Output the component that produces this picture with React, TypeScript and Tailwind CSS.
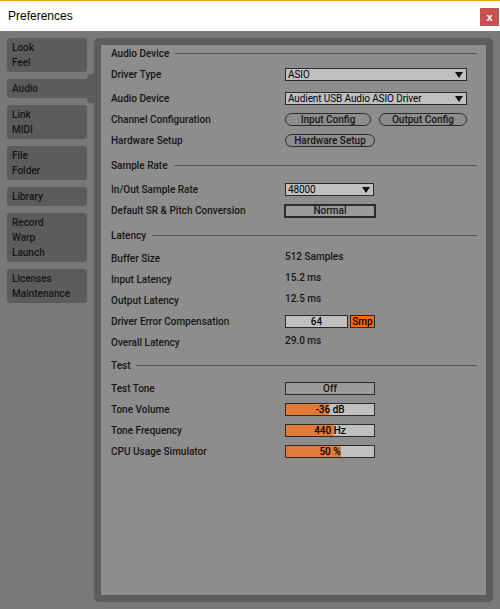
import type { ReactNode } from "react";

const tabs: { lines: string[]; active?: boolean }[] = [
  { lines: ["Look", "Feel"] },
  { lines: ["Audio"], active: true },
  { lines: ["Link", "MIDI"] },
  { lines: ["File", "Folder"] },
  { lines: ["Library"] },
  { lines: ["Record", "Warp", "Launch"] },
  { lines: ["Licenses", "Maintenance"] },
];

function Header({ title, className = "" }: { title: string; className?: string }) {
  return (
    <div className={`h-[16px] flex items-center gap-[6px] ${className}`}>
      <span className="leading-none mt-[1px]">{title}</span>
      <div className="flex-1 h-px bg-[#555555]" />
    </div>
  );
}

function Row({ label, children, className = "" }: { label: string; children?: ReactNode; className?: string }) {
  return (
    <div className={`h-[21px] flex items-center ${className}`}>
      <span className="w-[174px] shrink-0 leading-none">{label}</span>
      {children}
    </div>
  );
}

function Caret() {
  return (
    <svg width="8" height="6" viewBox="0 0 8 6" className="shrink-0">
      <polygon points="0,0 8,0 4,6" fill="#111111" />
    </svg>
  );
}

function Dropdown({ value, w }: { value: string; w: string }) {
  return (
    <div
      className={`${w} h-[13px] border border-[#2b2b2b] bg-[#c0c0c0] flex items-center justify-between pl-[2px] pr-[3px] text-black leading-none font-normal tracking-[-0.1px]`}
    >
      <span>{value}</span>
      <Caret />
    </div>
  );
}

function Pill({ label, w }: { label: string; w: string }) {
  return (
    <div
      className={`${w} h-[13px] rounded-full border border-[#2b2b2b] flex items-center justify-center leading-none`}
    >
      {label}
    </div>
  );
}

function Bar({ value, fill }: { value: string; fill: number }) {
  return (
    <div className="relative w-[90px] h-[13px] border border-[#2b2b2b] bg-[#c0c0c0] overflow-hidden flex items-center justify-center leading-none text-black">
      <div className="absolute left-0 top-0 bottom-0 bg-[#e07c38]" style={{ width: fill }} />
      <span className="relative">{value}</span>
    </div>
  );
}

export default function App() {
  return (
    <div className="w-[500px] h-[609px] flex flex-col bg-[#787878] font-['Roboto','Liberation_Sans',sans-serif] font-medium text-[10px] text-[#161616]">
      <div className="h-[31px] shrink-0 bg-white border-t border-[#f39c1f] flex items-start justify-between font-normal">
        <span className="pl-[8px] pt-[8px] text-[12px] leading-[14px] text-black font-['Liberation_Sans',sans-serif]">
          Preferences
        </span>
        <div className="mt-[7px] mr-[1px] w-[19px] h-[18px] bg-[#c75050] text-white font-bold text-[11px] leading-none flex items-center justify-center font-['Liberation_Sans',sans-serif]">
          x
        </div>
      </div>

      <div className="flex-1 flex p-[7px] gap-[7px]">
        <nav className="w-[80px] shrink-0 flex flex-col gap-[7px]">
          {tabs.map((t) => (
            <div
              key={t.lines[0]}
              className={`relative bg-[#5c5c5c] py-[2px] px-[5px] ${t.active ? "rounded-l-[3px]" : "rounded-[3px]"}`}
            >
              {t.lines.map((l) => (
                <div key={l} className="leading-[15px]">
                  {l}
                </div>
              ))}
              {t.active && (
                <div className="absolute left-[80px] top-[-5px] bottom-[-5px] w-[7px] bg-[#5c5c5c] rounded-l-[4px]" />
              )}
            </div>
          ))}
        </nav>

        <div className="flex-1 rounded-[5px] bg-[#5c5c5c] p-[7px]">
          <div className="h-full bg-[#8d8d8d] pl-[10px] pr-[9px]">
            <Header title="Audio Device" />
            <Row label="Driver Type" className="mt-[3px]">
              <Dropdown value="ASIO" w="w-[182px]" />
            </Row>
            <Row label="Audio Device" className="mt-[3px]">
              <Dropdown value="Audient USB Audio ASIO Driver" w="w-[182px]" />
            </Row>
            <Row label="Channel Configuration">
              <div className="flex gap-[8px]">
                <Pill label="Input Config" w="w-[86px]" />
                <Pill label="Output Config" w="w-[88px]" />
              </div>
            </Row>
            <Row label="Hardware Setup">
              <Pill label="Hardware Setup" w="w-[90px]" />
            </Row>

            <Header title="Sample Rate" className="mt-[6px]" />
            <Row label="In/Out Sample Rate" className="mt-[6px]">
              <Dropdown value="48000" w="w-[89px]" />
            </Row>
            <Row label="Default SR & Pitch Conversion">
              <div className="ml-[-1px] w-[92px] h-[14px] border-2 border-[#2b2b2b] bg-[#9b9b9b] flex items-center justify-center leading-none">
                Normal
              </div>
            </Row>

            <Header title="Latency" className="mt-[6px]" />
            <Row label="Buffer Size" className="mt-[5px]">
              <span className="leading-none mt-[-3px]">512 Samples</span>
            </Row>
            <Row label="Input Latency">
              <span className="leading-none mt-[-3px]">15.2 ms</span>
            </Row>
            <Row label="Output Latency">
              <span className="leading-none mt-[-3px]">12.5 ms</span>
            </Row>
            <Row label="Driver Error Compensation">
              <div className="flex gap-[2px]">
                <div className="w-[63px] h-[13px] border border-[#2b2b2b] bg-[#c0c0c0] flex items-center justify-center leading-none text-black">
                  64
                </div>
                <div className="w-[25px] h-[13px] border border-[#2b2b2b] bg-[#ff6a00] flex items-center justify-center leading-none text-black">
                  Smp
                </div>
              </div>
            </Row>
            <Row label="Overall Latency">
              <span className="leading-none mt-[-3px]">29.0 ms</span>
            </Row>

            <Header title="Test" className="mt-[4px]" />
            <Row label="Test Tone" className="mt-[5px]">
              <div className="w-[90px] h-[13px] border border-[#2b2b2b] bg-[#9b9b9b] flex items-center justify-center leading-none">
                Off
              </div>
            </Row>
            <Row label="Tone Volume">
              <Bar value="-36 dB" fill={43} />
            </Row>
            <Row label="Tone Frequency">
              <Bar value="440 Hz" fill={48} />
            </Row>
            <Row label="CPU Usage Simulator">
              <Bar value="50 %" fill={55} />
            </Row>
          </div>
        </div>
      </div>
    </div>
  );
}
